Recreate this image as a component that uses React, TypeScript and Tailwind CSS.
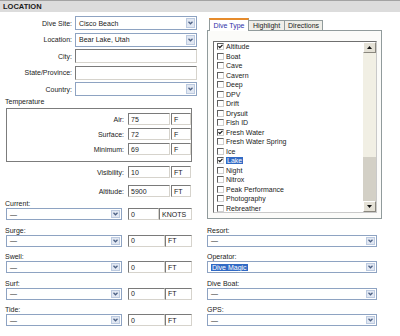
const diveTypes = [
  { name: "Altitude", checked: true },
  { name: "Boat" },
  { name: "Cave" },
  { name: "Cavern" },
  { name: "Deep" },
  { name: "DPV" },
  { name: "Drift" },
  { name: "Drysuit" },
  { name: "Fish ID" },
  { name: "Fresh Water", checked: true },
  { name: "Fresh Water Spring" },
  { name: "Ice" },
  { name: "Lake", checked: true, selected: true },
  { name: "Night" },
  { name: "Nitrox" },
  { name: "Peak Performance" },
  { name: "Photography" },
  { name: "Rebreather" },
]

function Chevron() {
  return (
    <svg width="5" height="4" viewBox="0 0 5 4">
      <path d="M0.5 0.8 L2.5 2.8 L4.5 0.8" stroke="#4d6185" strokeWidth="1.3" fill="none" />
    </svg>
  )
}

function Select({
  value,
  className,
  selected,
}: {
  value?: string
  className: string
  selected?: boolean
}) {
  return (
    <div className={`flex items-stretch border border-[#8ea3c2] bg-white p-px ${className}`}>
      <div className="flex-1 flex items-center pl-[2px] overflow-hidden whitespace-nowrap">
        {value && (
          <span className={selected ? "bg-[#316ac5] text-white px-px" : ""}>{value}</span>
        )}
      </div>
      <div className="w-[9px] flex items-center justify-center bg-[#e1e7f2] border border-[#bccae0]">
        <Chevron />
      </div>
    </div>
  )
}

function TextBox({ value, className }: { value?: string; className: string }) {
  return (
    <div
      className={`flex items-center pl-[2px] bg-white border border-t-[#7a7a7a] border-l-[#7a7a7a] border-r-[#d6d3cc] border-b-[#d6d3cc] whitespace-nowrap overflow-hidden ${className}`}
    >
      {value}
    </div>
  )
}

function CheckBox({ checked }: { checked?: boolean }) {
  return (
    <div className="w-[7px] h-[7px] bg-white border border-t-[#5f5f5f] border-l-[#5f5f5f] border-r-[#cfcfcf] border-b-[#cfcfcf] flex items-center justify-center">
      {checked && (
        <svg width="5" height="5" viewBox="0 0 5 5">
          <path d="M0.5 2.2 L1.8 3.6 L4.5 0.8" stroke="#111" strokeWidth="1.2" fill="none" />
        </svg>
      )}
    </div>
  )
}

function ScrollButton({ up }: { up?: boolean }) {
  return (
    <div className="flex items-center justify-center bg-[#e4e1d6] border border-t-white border-l-white border-r-[#8a877e] border-b-[#8a877e] h-[11px]">
      <svg width="5" height="3" viewBox="0 0 5 3">
        <path d={up ? "M0 3 L2.5 0 L5 3 Z" : "M0 0 L2.5 3 L5 0 Z"} fill="#111" />
      </svg>
    </div>
  )
}

export default function App() {
  const tempRows = [
    { label: "Air:", value: "75" },
    { label: "Surface:", value: "72" },
    { label: "Minimum:", value: "69" },
  ]
  const conditions = [
    { label: "Current:", unit: "KNOTS", wide: true },
    { label: "Surge:", unit: "FT" },
    { label: "Swell:", unit: "FT" },
    { label: "Surf:", unit: "FT" },
    { label: "Tide:", unit: "FT" },
  ]
  const business = [
    { label: "Resort:", value: "—" },
    { label: "Operator:", value: "Dive Magic", selected: true },
    { label: "Dive Boat:", value: "—" },
    { label: "GPS:", value: "—" },
  ]

  return (
    <div className="w-[400px] h-[336px] bg-white overflow-hidden font-['Liberation_Sans',Arial,sans-serif] text-[7px] leading-none text-[#222]">
      {/* Header */}
      <div className="h-[12px] border-t border-[#a3a3a3] bg-[#dcdcdc] flex items-center pl-[3px] font-bold text-[7.5px] text-[#1a1a1a]">
        LOCATION
      </div>

      <div className="flex">
        {/* Left column */}
        <div className="w-[200px] flex flex-col">
          <div className="flex flex-col gap-[2.5px] pt-[4px]">
            <div className="flex items-center h-[14px]">
              <span className="w-[72px] text-right">Dive Site:</span>
              <Select value="Cisco Beach" className="ml-[3px] w-[122px] h-[14px]" />
            </div>
            <div className="flex items-center h-[14px]">
              <span className="w-[72px] text-right">Location:</span>
              <Select value="Bear Lake, Utah" className="ml-[3px] w-[122px] h-[14px]" />
            </div>
            <div className="flex items-center h-[14px]">
              <span className="w-[72px] text-right">City:</span>
              <TextBox className="ml-[3px] w-[122px] h-[14px]" />
            </div>
            <div className="flex items-center h-[14px]">
              <span className="w-[72px] text-right">State/Province:</span>
              <TextBox className="ml-[3px] w-[122px] h-[14px]" />
            </div>
            <div className="flex items-center h-[14px]">
              <span className="w-[72px] text-right">Country:</span>
              <Select className="ml-[3px] w-[122px] h-[14px]" />
            </div>
          </div>

          <div className="h-[8px] mt-[1px] pl-[5px] flex items-center">Temperature</div>
          <div className="ml-[6px] mt-[3px] w-[186px] h-[54px] border border-[#7c7c7c] flex flex-col gap-[3px] pt-[4px]">
            {tempRows.map((r) => (
              <div key={r.label} className="flex items-center h-[12px]">
                <span className="w-[117px] text-right">{r.label}</span>
                <TextBox value={r.value} className="ml-[4px] w-[42px] h-[12px]" />
                <TextBox value="F" className="ml-px w-[20px] h-[12px]" />
              </div>
            ))}
          </div>

          <div className="flex items-center h-[12px] mt-[4px]">
            <span className="w-[124px] text-right">Visibility:</span>
            <TextBox value="10" className="ml-[4px] w-[42px] h-[12px]" />
            <TextBox value="FT" className="ml-px w-[20px] h-[12px]" />
          </div>
          <div className="flex items-center h-[12px] mt-[7px]">
            <span className="w-[124px] text-right">Altitude:</span>
            <TextBox value="5900" className="ml-[4px] w-[42px] h-[12px]" />
            <TextBox value="FT" className="ml-px w-[20px] h-[12px]" />
          </div>

          <div className="flex flex-col gap-[6px] mt-[2.5px]">
            {conditions.map((c) => (
              <div key={c.label} className="flex flex-col">
                <div className="h-[8px] pl-[5px] flex items-center">{c.label}</div>
                <div className="flex items-center mt-[0.5px] h-[12px]">
                  <Select value="—" className="ml-[6px] w-[116px] h-[12px]" />
                  {c.wide ? (
                    <>
                      <TextBox value="0" className="ml-[6px] w-[31px] h-[12px]" />
                      <TextBox value="KNOTS" className="w-[33px] h-[12px]" />
                    </>
                  ) : (
                    <>
                      <TextBox value="0" className="ml-[6px] w-[37px] h-[12px]" />
                      <TextBox value={c.unit} className="w-[27px] h-[12px]" />
                    </>
                  )}
                </div>
              </div>
            ))}
          </div>
        </div>

        {/* Right column */}
        <div className="ml-[7px] w-[175px] flex flex-col pt-[6px]">
          {/* Tabs */}
          <div className="flex items-end h-[12px] pl-[2px]">
            <div className="relative z-10 -mb-px w-[40px] h-[13px] bg-white border-t-2 border-t-[#e68b2c] border-x border-x-[#919b9c] flex items-center justify-center text-[#2f2fa8]">
              Dive Type
            </div>
            <div className="w-[36px] h-[10px] bg-[#efeee8] border-t border-r border-[#919b9c] flex items-center justify-center">
              Highlight
            </div>
            <div className="w-[38px] h-[10px] bg-[#efeee8] border-t border-r border-[#919b9c] flex items-center justify-center">
              Directions
            </div>
          </div>

          {/* Panel */}
          <div className="h-[189px] border border-[#919b9c] bg-[#fbfbf9] pl-[5px] pt-[10px] pr-[4px]">
            <div className="w-[164px] h-[172px] border border-t-[#6f6f6f] border-l-[#6f6f6f] border-r-[#c9c9c9] border-b-[#c9c9c9] bg-white flex">
              <div className="flex-1 flex flex-col pl-[3px] overflow-hidden">
                {diveTypes.map((d) => (
                  <div key={d.name} className="h-[9.5px] flex items-center shrink-0">
                    <CheckBox checked={d.checked} />
                    <span
                      className={`ml-[2px] whitespace-nowrap ${
                        d.selected ? "bg-[#316ac5] text-white px-px -ml-px" : ""
                      }`}
                    >
                      {d.name}
                    </span>
                  </div>
                ))}
              </div>
              <div className="w-[13px] flex flex-col">
                <ScrollButton up />
                <div className="h-[104px] bg-[#f1efe4]" />
                <div className="flex-1 bg-[#d3d0c6]" />
                <ScrollButton />
              </div>
            </div>
          </div>

          <div className="flex flex-col gap-[6px] mt-[7px]">
            {business.map((b) => (
              <div key={b.label} className="flex flex-col">
                <div className="h-[8px] flex items-center">{b.label}</div>
                <Select
                  value={b.value}
                  selected={b.selected}
                  className="mt-[0.5px] w-[170px] h-[12px]"
                />
              </div>
            ))}
          </div>
        </div>
      </div>
    </div>
  )
}
